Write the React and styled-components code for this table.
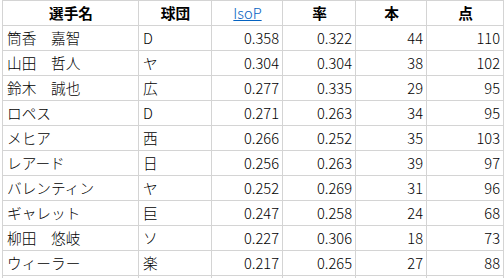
import React from "react";
import styled, { createGlobalStyle } from "styled-components";

const Global = createGlobalStyle`
  html, body { margin: 0; padding: 0; background: #fff; }
  body { font-family: "Noto Sans CJK JP", "Noto Sans", sans-serif; overflow: hidden; }
`;

const Sheet = styled.div`
  padding-left: 2px;
  width: 504px;
  height: 278px;
  box-sizing: border-box;
  overflow: hidden;
`;

const Grid = styled.div`
  display: grid;
  grid-template-columns: 135px 72px 70px 72px 70px 76px;
  grid-auto-rows: 24px;
  gap: 1px;
  padding: 1px;
  background: #d4d4d4;
  width: max-content;
`;

const Cell = styled.div`
  background: #fff;
  font-size: 14.67px;
  line-height: 24px;
  color: #000;
  white-space: pre;
  overflow: hidden;
  padding: 0 3px 0 4px;
  text-align: ${(p) => p.$align || "left"};
  font-weight: ${(p) => (p.$bold ? 700 : 300)};
`;

const Link = styled.span`
  color: #0563c1;
  text-decoration: underline;
  font-weight: 300;
`;

const rows = [
  ["筒香　嘉智", "D", "0.358", "0.322", "44", "110"],
  ["山田　哲人", "ヤ", "0.304", "0.304", "38", "102"],
  ["鈴木　誠也", "広", "0.277", "0.335", "29", "95"],
  ["ロペス", "D", "0.271", "0.263", "34", "95"],
  ["メヒア", "西", "0.266", "0.252", "35", "103"],
  ["レアード", "日", "0.256", "0.263", "39", "97"],
  ["バレンティン", "ヤ", "0.252", "0.269", "31", "96"],
  ["ギャレット", "巨", "0.247", "0.258", "24", "68"],
  ["柳田　悠岐", "ソ", "0.227", "0.306", "18", "73"],
  ["ウィーラー", "楽", "0.217", "0.265", "27", "88"],
];

export default function App() {
  return (
    <Sheet>
      <Global />
      <Grid>
        <Cell $align="center" $bold>選手名</Cell>
        <Cell $align="center" $bold>球団</Cell>
        <Cell $align="center"><Link>IsoP</Link></Cell>
        <Cell $align="center" $bold>率</Cell>
        <Cell $align="center" $bold>本</Cell>
        <Cell $align="center" $bold>点</Cell>
        {rows.map((r, i) => (
          <React.Fragment key={i}>
            <Cell>{r[0]}</Cell>
            <Cell>{r[1]}</Cell>
            <Cell $align="right">{r[2]}</Cell>
            <Cell $align="right">{r[3]}</Cell>
            <Cell $align="right">{r[4]}</Cell>
            <Cell $align="right">{r[5]}</Cell>
          </React.Fragment>
        ))}
        {Array.from({ length: 6 }).map((_, i) => (
          <Cell key={"e" + i} />
        ))}
      </Grid>
    </Sheet>
  );
}
